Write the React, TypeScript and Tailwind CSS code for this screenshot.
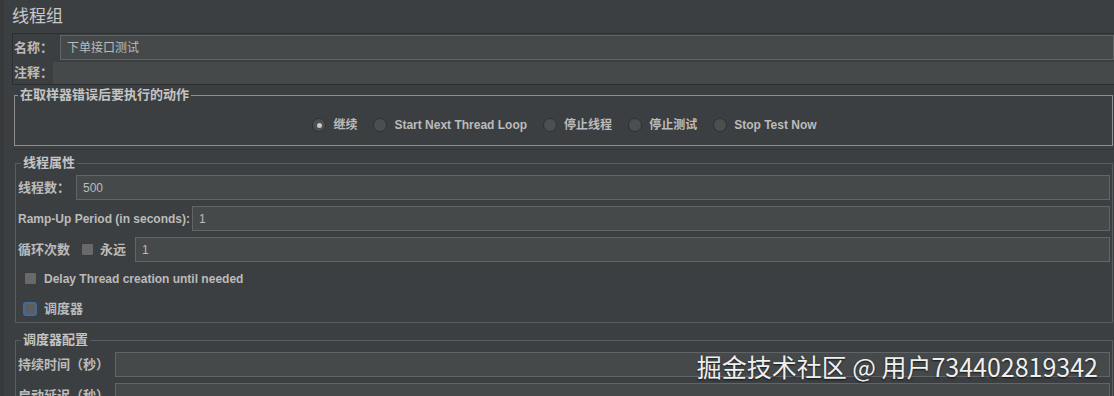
import React from 'react';

const FONT = "font-['Liberation_Sans','Noto_Sans_CJK_SC',sans-serif]";

const radios = [
  { label: "继续", checked: true },
  { label: "Start Next Thread Loop" },
  { label: "停止线程" },
  { label: "停止测试" },
  { label: "Stop Test Now" },
];

function Radio({ checked }: { checked?: boolean }) {
  return (
    <span className="w-[14px] h-[14px] rounded-full border border-[#2f3133] bg-[#4c4f51] flex items-center justify-center shrink-0">
      {checked && <span className="w-[5px] h-[5px] rounded-full bg-[#c8c8c8]" />}
    </span>
  );
}

function Checkbox({ focused }: { focused?: boolean }) {
  if (focused) {
    return (
      <span className="w-[14px] h-[14px] rounded-[3px] border-2 border-[#466a96] bg-[#5c5f61] shrink-0" />
    );
  }
  return <span className="w-[13px] h-[13px] rounded-[2px] border border-[#3a3c3e] bg-[#68696b] shrink-0" />;
}

function Field({ value }: { value?: string }) {
  return (
    <div className="flex-1 h-[25px] border border-[#626567] bg-[#45494a] pl-[6px] flex items-center text-[12px] font-normal text-[#bbbbbb]">
      {value}
    </div>
  );
}

function Legend({ children }: { children: React.ReactNode }) {
  return (
    <legend className="ml-[3px] px-[2px] text-[13px] leading-[16px] font-bold text-[#c4c4c4]">{children}</legend>
  );
}

export default function App() {
  return (
    <div className={`${FONT} relative w-[1114px] h-[396px] overflow-hidden bg-[#3c3f41] border-l-[4px] border-[#37393b] text-[#bbbbbb]`}>
      <div className="h-[33px] pl-[8px] text-[17px] leading-[33px] text-[#c8c8c8]">线程组</div>

      {/* name / comment */}
      <div className="ml-[8px] h-[52px] border-y border-l border-[#2c2e30]">
        <div className="flex items-center mt-[1px] pl-[1px]">
          <span className="w-[46px] text-[13px] font-bold">名称：</span>
          <Field value="下单接口测试" />
        </div>
        <div className="flex items-center mt-[2px] h-[22px] pl-[1px]">
          <span className="w-[39px] text-[13px] font-bold">注释：</span>
          <div className="flex-1 h-full bg-[#45494a]" />
        </div>
      </div>

      {/* on sampler error */}
      <fieldset className="mt-[2px] ml-[10px] mr-[1px] border border-[#8d8f91]">
        <Legend>在取样器错误后要执行的动作</Legend>
        <div className="h-[42px] pt-[2px] pl-[2px] flex items-center justify-center gap-[16px] text-[12px] font-bold">
          {radios.map((r) => (
            <div key={r.label} className="flex items-center gap-[7px]">
              <Radio checked={r.checked} />
              <span>{r.label}</span>
            </div>
          ))}
        </div>
      </fieldset>

      <div className="mt-[3px] ml-[8px] h-[1px] bg-[#333537]" />

      {/* thread properties */}
      <fieldset className="mt-[5px] ml-[11px] mr-[1px] border border-[#595c5e] px-[2px] pb-[1px]">
        <Legend>线程属性</Legend>
        <div className="flex flex-col gap-[6px] mt-[4px] text-[13px] font-bold">
          <div className="flex items-center">
            <span className="w-[58px]">线程数：</span>
            <Field value="500" />
          </div>
          <div className="flex items-center">
            <span className="w-[174px] text-[12px]">Ramp-Up Period (in seconds):</span>
            <Field value="1" />
          </div>
          <div className="flex items-center">
            <span className="w-[63px]">循环次数</span>
            <Checkbox />
            <span className="ml-[6px] w-[35px]">永远</span>
            <Field value="1" />
          </div>
        </div>
        <div className="mt-[4px] h-[25px] flex items-center gap-[7px] pl-[6px] text-[12px] font-bold">
          <Checkbox />
          <span>Delay Thread creation until needed</span>
        </div>
        <div className="mt-[5px] h-[25px] flex items-center gap-[7px] pl-[5px] text-[13px] font-bold">
          <Checkbox focused />
          <span>调度器</span>
        </div>
      </fieldset>

      {/* scheduler config */}
      <fieldset className="mt-[9px] ml-[11px] mr-[1px] border border-[#595c5e] px-[2px]">
        <Legend>调度器配置</Legend>
        <div className="flex flex-col gap-[6px] mt-[4px] text-[13px] font-bold">
          <div className="flex items-center">
            <span className="w-[97px]">持续时间（秒）</span>
            <Field />
          </div>
          <div className="flex items-center">
            <span className="w-[97px]">启动延迟（秒）</span>
            <Field />
          </div>
        </div>
      </fieldset>

      <div className="absolute right-[16px] top-[350px] text-[25px] leading-[32px] text-[#f0f0f0] font-['Noto_Sans_CJK_SC',sans-serif] [text-shadow:0_1px_2px_rgba(0,0,0,0.7)]">
        掘金技术社区 @ 用户734402819342
      </div>
    </div>
  );
}
